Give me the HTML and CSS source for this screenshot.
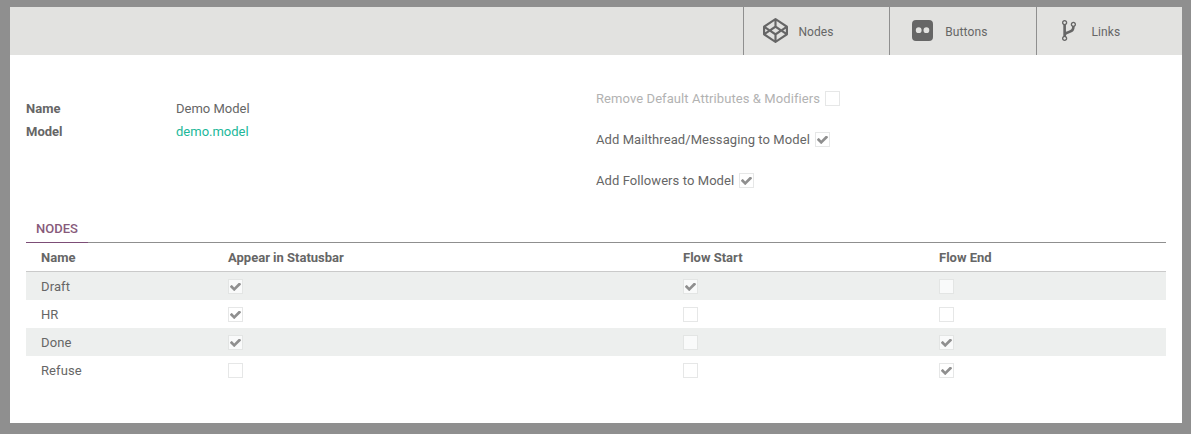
FILE: index.html
```html
<!DOCTYPE html>
<html lang="en">
<head>
<meta charset="utf-8">
<title>Demo Model</title>
<link rel="stylesheet" href="styles.css">
</head>
<body>
<svg class="defs" width="0" height="0">
  <symbol id="check" viewBox="121 406 1550 1116"><path d="M1671 566q0 40-28 68l-724 724-136 136q-28 28-68 28t-68-28l-136-136-362-362q-28-28-28-68t28-68l136-136q28-28 68-28t68 28l294 295 656-657q28-28 68-28t68 28l136 136q28 28 28 68z"/></symbol>
</svg>
<main class="sheet">
  <nav class="button-box">
    <a class="stat stat-nodes"><svg class="icon codepen" viewBox="0 0 1792 1792"><path d="M216 1169l603 402v-359l-334-223zM155 1025l193-129-193-129v258zM973 1571l603-402-269-180-334 223v359zM896 1078l272-182-272-182-272 182zM485 803l334-223v-359l-603 402zM1444 896l193 129v-258zM1307 803l269-180-603-402v359zM1792 623v546q0 41-34 64l-819 546q-21 13-43 13t-43-13l-819-546q-34-23-34-64v-546q0-41 34-64l819-546q21-13 43-13t43 13l819 546q34 23 34 64z"/></svg><span>Nodes</span></a>
    <a class="stat stat-buttons"><svg class="icon flickr" viewBox="0 0 21 21"><path fill-rule="evenodd" d="M4 0h13a4 4 0 0 1 4 4v13a4 4 0 0 1-4 4H4a4 4 0 0 1-4-4V4a4 4 0 0 1 4-4zM6.7 7.3a2.9 2.9 0 1 0 0 5.8a2.9 2.9 0 0 0 0-5.8zM14.4 7.3a2.9 2.9 0 1 0 0 5.8a2.9 2.9 0 0 0 0-5.8z"/></svg><span>Buttons</span></a>
    <a class="stat stat-links"><svg class="icon fork" viewBox="384 128 1024 1536"><path d="M672 1472q0-40-28-68t-68-28-68 28-28 68 28 68 68 28 68-28 28-68zm0-1152q0-40-28-68t-68-28-68 28-28 68 28 68 68 28 68-28 28-68zm640 128q0-40-28-68t-68-28-68 28-28 68 28 68 68 28 68-28 28-68zm96 0q0 52-26 96.5t-70 69.5q-2 287-226 414-67 38-203 81-128 40-169.5 71t-41.5 100v26q44 25 70 69.5t26 96.5q0 80-56 136t-136 56-136-56-56-136q0-52 26-96.5t70-69.5v-820q-44-25-70-69.5t-26-96.5q0-80 56-136t136-56 136 56 56 136q0 52-26 96.5t-70 69.5v497q54-26 154-57 55-17 87.5-29.5t70.5-31 59-39.5 40.5-51 28-69.5 8.5-91.5q-44-25-70-69.5t-26-96.5q0-80 56-136t136-56 136 56 56 136z"/></svg><span>Links</span></a>
  </nav>
  <section class="groups">
    <dl class="fields">
      <dt>Name</dt><dd>Demo Model</dd>
      <dt>Model</dt><dd><a class="link">demo.model</a></dd>
    </dl>
    <div class="options">
      <div class="option muted">Remove Default Attributes &amp; Modifiers<i class="box"></i></div>
      <div class="option">Add Mailthread/Messaging to Model<i class="box"><svg><use href="#check"/></svg></i></div>
      <div class="option">Add Followers to Model<i class="box"><svg><use href="#check"/></svg></i></div>
    </div>
  </section>
  <section class="notebook">
    <div class="tabs"><span class="tab">NODES</span></div>
    <div class="row head"><span>Name</span><span>Appear in Statusbar</span><span>Flow Start</span><span>Flow End</span></div>
    <div class="row odd"><span>Draft</span><i class="box"><svg><use href="#check"/></svg></i><i class="box"><svg><use href="#check"/></svg></i><i class="box"></i></div>
    <div class="row"><span>HR</span><i class="box"><svg><use href="#check"/></svg></i><i class="box"></i><i class="box"></i></div>
    <div class="row odd"><span>Done</span><i class="box"><svg><use href="#check"/></svg></i><i class="box"></i><i class="box"><svg><use href="#check"/></svg></i></div>
    <div class="row"><span>Refuse</span><i class="box"></i><i class="box"></i><i class="box"><svg><use href="#check"/></svg></i></div>
  </section>
</main>
</body>
</html>
```
FILE: styles.css
```css
* { box-sizing: border-box; }
body {
  margin: 0;
  height: 434px;
  padding: 7px 9px 11px 10px;
  background: #8f8f8f;
  color: #666;
  font: 13px/20px Roboto, sans-serif;
}
.defs { display: block; }
.sheet { height: 416px; background: #fff; }
.button-box {
  display: flex;
  justify-content: flex-end;
  height: 48px;
  background: #e2e2e0;
  font-size: 12px;
  letter-spacing: 0.1px;
}
.stat {
  display: flex;
  align-items: center;
  width: 146px;
  padding-top: 1px;
  border-left: 1px solid #8f8f8f;
}
.stat-nodes { padding-left: 19px; }
.stat-buttons { width: 147px; padding-left: 21.5px; }
.stat-links { padding-left: 24.5px; }
.icon { display: block; fill: #666; flex: none; margin-top: -3px; }
.codepen { width: 25px; height: 25px; margin-right: 10.4px; }
.flickr { width: 21px; height: 21px; margin-right: 12.8px; }
.fork { width: 14px; height: 21px; margin-right: 16px; }
.groups { display: flex; height: 158px; padding: 34px 16px 0; }
.fields {
  display: grid;
  grid-template-columns: 150px 1fr;
  grid-auto-rows: 23px;
  width: 570px;
  margin: 10px 0 0;
}
.fields dt { font-weight: 700; }
.fields dd { margin: 0; }
.link { color: #21b799; }
.option {
  display: flex;
  align-items: center;
  height: 20px;
  margin-bottom: 21px;
  letter-spacing: 0.08px;
}
.option .box { margin: 0 0 1px 5px; }
.muted { color: #b2b2b2; }
.box {
  display: flex;
  align-items: center;
  justify-content: center;
  width: 15px;
  height: 15px;
  border: 1px solid #e6e7e7;
  background: #fff;
}
.box svg { width: 11px; height: 8px; margin-top: 1px; fill: #8f8f8f; }
.notebook { padding: 0 16px; }
.tabs { display: flex; height: 30px; box-shadow: inset 0 -1px #8f8f8f; }
.tab {
  width: 62px;
  padding: 6px 0 0 10px;
  border-bottom: 1px solid #7c4d76;
  color: #875a7b;
  font-weight: 500;
}
.row {
  display: grid;
  grid-template-columns: 187px 455px 256px 1fr;
  align-items: center;
  height: 28px;
  padding-left: 15px;
}
.row span { padding-top: 2px; }
.row:not(.head) span { letter-spacing: 0.1px; }
.head { height: 29px; border-bottom: 1px solid #cacaca; font-weight: 700; }
.odd { background: #edefee; }
.odd .box { border-color: #e3e5e4; background: #f9fafa; }
```
